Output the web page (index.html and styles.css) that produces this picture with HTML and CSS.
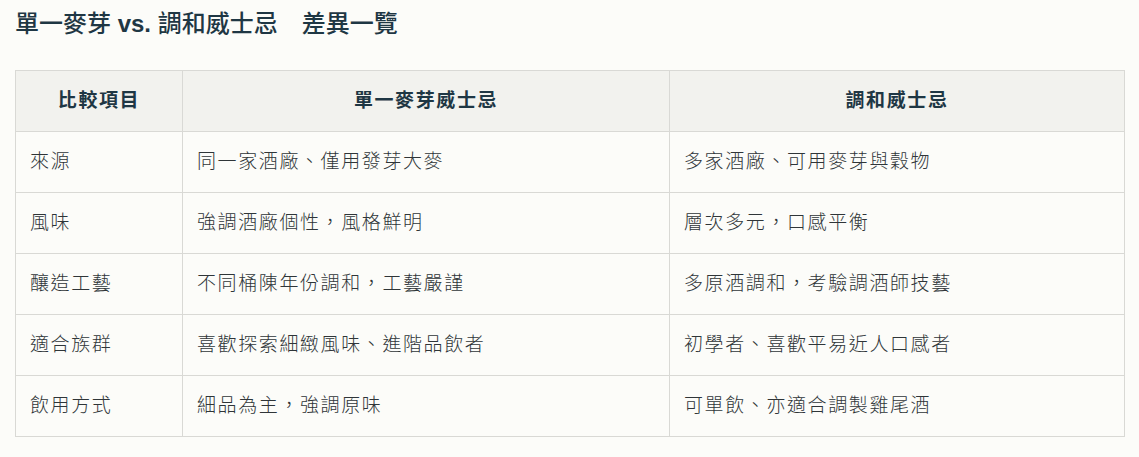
FILE: index.html
```html
<!DOCTYPE html>
<html lang="zh-Hant">
<head>
<meta charset="utf-8">
<title>單一麥芽 vs. 調和威士忌 差異一覽</title>
<link rel="stylesheet" href="styles.css">
</head>
<body>
<main class="page">
  <h2 class="title">單一麥芽 <span class="latin">vs.</span> 調和威士忌　差異一覽</h2>
  <table class="compare">
    <colgroup>
      <col class="c1"><col class="c2"><col class="c3">
    </colgroup>
    <thead>
      <tr><th>比較項目</th><th>單一麥芽威士忌</th><th>調和威士忌</th></tr>
    </thead>
    <tbody>
      <tr><td>來源</td><td>同一家酒廠、僅用發芽大麥</td><td>多家酒廠、可用麥芽與穀物</td></tr>
      <tr><td>風味</td><td>強調酒廠個性，風格鮮明</td><td>層次多元，口感平衡</td></tr>
      <tr><td>釀造工藝</td><td>不同桶陳年份調和，工藝嚴謹</td><td>多原酒調和，考驗調酒師技藝</td></tr>
      <tr><td>適合族群</td><td>喜歡探索細緻風味、進階品飲者</td><td>初學者、喜歡平易近人口感者</td></tr>
      <tr><td>飲用方式</td><td>細品為主，強調原味</td><td>可單飲、亦適合調製雞尾酒</td></tr>
    </tbody>
  </table>
</main>
</body>
</html>
```
FILE: styles.css
```css
html, body {
  margin: 0;
  padding: 0;
  background: #fcfcf9;
}
body {
  font-family: "Liberation Sans", "Noto Sans CJK TC", sans-serif;
  color: #2f3b40;
}
.page {
  padding: 6px 15px 0 15px;
}
.title {
  margin: 0 0 28px 0;
  font-size: 24px;
  line-height: 36px;
  font-weight: 500;
  color: #1f3744;
}
.latin {
  font-weight: 700;
}
.compare {
  width: 1109px;
  border-collapse: collapse;
  table-layout: fixed;
  background: #fcfcf9;
}
.c1 { width: 167px; }
.c2 { width: 487px; }
.c3 { width: 455px; }
.compare th, .compare td {
  border: 1px solid #d9d9d5;
  height: 61px;
  padding: 0 14px;
  box-sizing: border-box;
  font-size: 19px;
  letter-spacing: 1.6px;
  line-height: 28px;
  vertical-align: middle;
}
.compare th {
  background: #f2f2ee;
  font-weight: 700;
  color: #1f3744;
  text-align: center;
}
.compare td {
  text-align: left;
  font-weight: 300;
  color: #2f3538;
}
```
